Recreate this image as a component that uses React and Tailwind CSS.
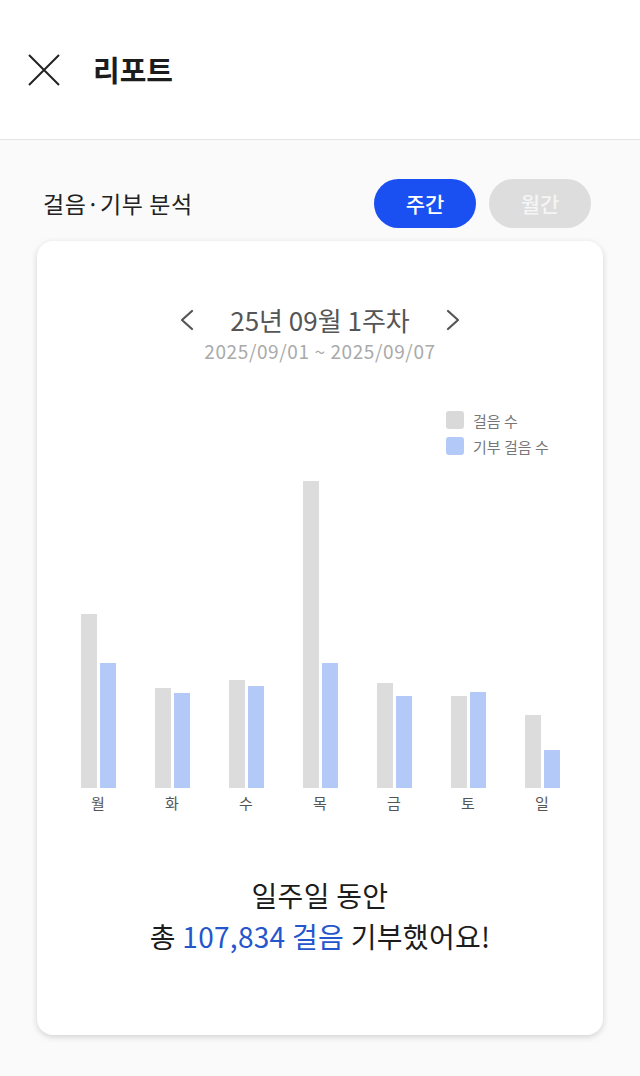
import React from "react";

const days = [
  { label: "월", steps: 174, donated: 125 },
  { label: "화", steps: 100, donated: 95 },
  { label: "수", steps: 108, donated: 102 },
  { label: "목", steps: 307, donated: 125 },
  { label: "금", steps: 105, donated: 92 },
  { label: "토", steps: 92, donated: 96 },
  { label: "일", steps: 73, donated: 38 },
];

function Chevron({ dir }) {
  return (
    <svg width="16" height="22" viewBox="0 0 16 22" fill="none">
      <path
        d={dir === "left" ? "M13 2 L3 11 L13 20" : "M3 2 L13 11 L3 20"}
        stroke="#555"
        strokeWidth="2.2"
        strokeLinecap="round"
        strokeLinejoin="round"
      />
    </svg>
  );
}

export default function App() {
  return (
    <div
      className="w-[640px] h-[1076px] bg-[#fafafa] overflow-hidden"
      style={{ fontFamily: '"Noto Sans CJK KR", "Noto Sans", sans-serif' }}
    >
      {/* Header */}
      <div className="h-[140px] bg-white border-b border-[#e4e4e4] flex items-center pl-[28px]">
        <svg width="32" height="32" viewBox="0 0 32 32" fill="none">
          <path d="M1 1 L31 31 M31 1 L1 31" stroke="#222" strokeWidth="2" />
        </svg>
        <h1 className="ml-[33px] text-[29px] font-semibold text-[#1c1c1c] leading-none">리포트</h1>
      </div>

      <div className="px-[37px]">
        {/* Section title + tabs */}
        <div className="mt-[39px] flex items-center justify-between pr-[12px]">
          <h2 className="pl-[6px] text-[23px] text-[#222] tracking-[0.6px]">걸음·기부 분석</h2>
          <div className="flex gap-[13px]">
            <button className="w-[102px] h-[49px] rounded-full bg-[#1a4ff2] text-white text-[21px] font-medium">
              주간
            </button>
            <button className="w-[102px] h-[49px] rounded-full bg-[#dddddd] text-[#f5f5f5] text-[21px] font-medium">
              월간
            </button>
          </div>
        </div>

        {/* Card */}
        <div className="mt-[13px] h-[794px] bg-white rounded-[16px] shadow-[0_2px_6px_rgba(0,0,0,0.16)] px-[24px] pt-[62px]">
          <div className="flex items-center justify-center">
            <Chevron dir="left" />
            <div className="w-[250px] text-center text-[26px] text-[#555] leading-[33px]">
              25년 09월 1주차
            </div>
            <Chevron dir="right" />
          </div>
          <div className="mt-[3px] text-center text-[19px] text-[#aaa] leading-[24px] tracking-[0.6px]">
            2025/09/01 ~ 2025/09/07
          </div>

          {/* Legend */}
          <div className="mt-[48px] ml-[385px] flex flex-col gap-[8px]">
            <div className="flex items-center gap-[9px] h-[18px]">
              <span className="w-[18px] h-[18px] rounded-[3px] bg-[#d9d9d9]" />
              <span className="text-[15px] text-[#777] leading-none">걸음 수</span>
            </div>
            <div className="flex items-center gap-[9px] h-[18px]">
              <span className="w-[18px] h-[18px] rounded-[3px] bg-[#b3c9f7]" />
              <span className="text-[15px] text-[#777] leading-none">기부 걸음 수</span>
            </div>
          </div>

          {/* Bars */}
          <div className="mt-[13px] h-[320px] flex items-end">
            {days.map((d) => (
              <div key={d.label} className="flex-1 flex justify-center items-end gap-[3px]">
                <div className="w-[16px] bg-[#dcdcdc]" style={{ height: d.steps }} />
                <div className="w-[16px] bg-[#b3c9f7]" style={{ height: d.donated }} />
              </div>
            ))}
          </div>
          <div className="flex mt-[5px]">
            {days.map((d) => (
              <div key={d.label} className="flex-1 text-center text-[15px] text-[#555] leading-[20px]">
                {d.label}
              </div>
            ))}
          </div>

          {/* Summary */}
          <div className="mt-[62px] text-center text-[28px] text-[#1c1c1c] leading-[41px] tracking-[0.3px]">
            <div>일주일 동안</div>
            <div>
              총 <span className="text-[#2456cc]">107,834 걸음</span> 기부했어요!
            </div>
          </div>
        </div>
      </div>
    </div>
  );
}
